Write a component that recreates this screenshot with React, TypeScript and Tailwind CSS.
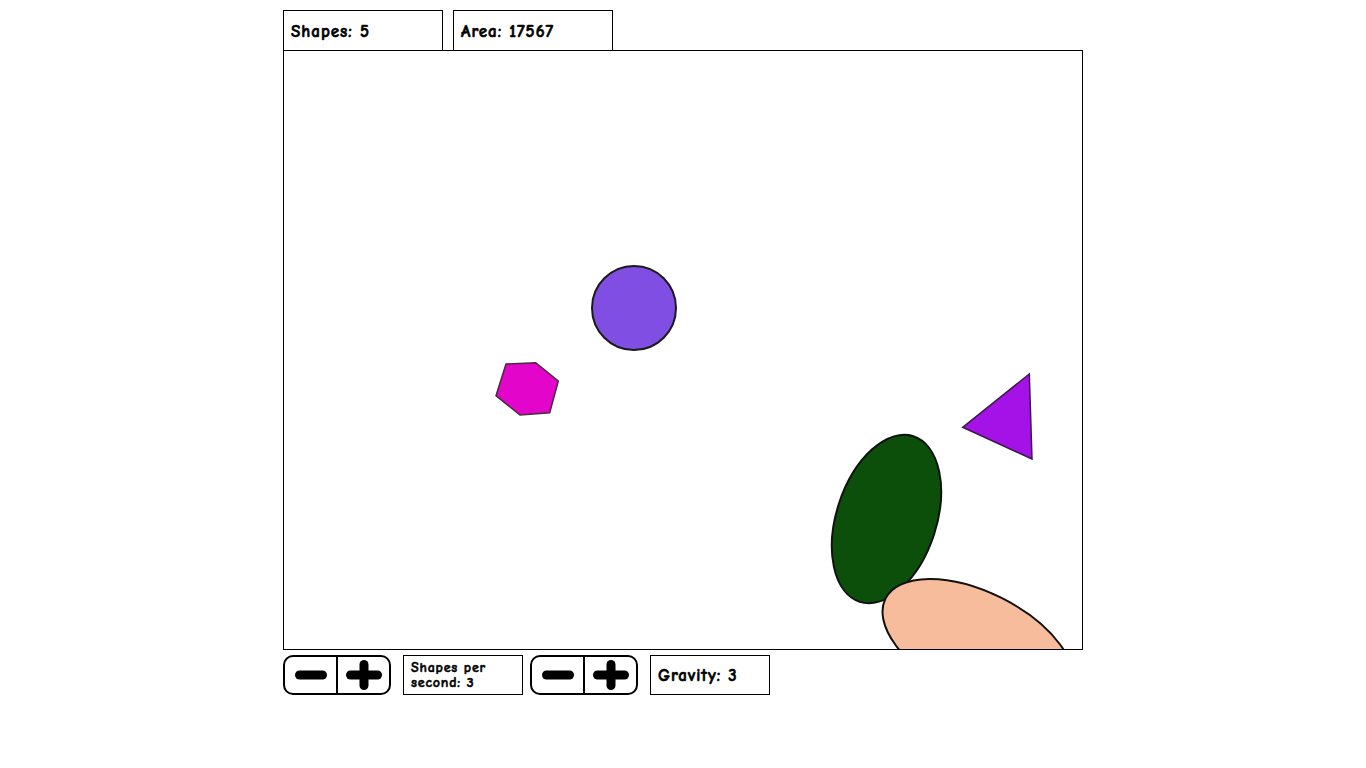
const FONT = { fontFamily: '"Comic Sans MS", "Comic Neue", "DejaVu Sans", sans-serif' };

function StatBox({
  children,
  className = "",
}: {
  children: React.ReactNode;
  className?: string;
}) {
  return (
    <div
      className={`h-[40px] border border-black flex items-center pl-[7px] pt-[2px] font-bold text-[17px] tracking-[1px] text-black [-webkit-text-stroke:0.6px_black] ${className}`}
    >
      {children}
    </div>
  );
}

function Stepper() {
  return (
    <div className="w-[108px] h-[40px] border-2 border-black rounded-[10px] flex overflow-hidden">
      <button className="flex-1 flex items-center justify-center border-r-2 border-black">
        <svg width="34" height="12" viewBox="0 0 34 12">
          <line x1="5.5" y1="6" x2="28.5" y2="6" stroke="black" strokeWidth="9" strokeLinecap="round" />
        </svg>
      </button>
      <button className="flex-1 flex items-center justify-center">
        <svg width="36" height="30" viewBox="0 0 36 30">
          <line x1="4.5" y1="15" x2="31.5" y2="15" stroke="black" strokeWidth="9" strokeLinecap="round" />
          <line x1="18" y1="4.5" x2="18" y2="25.5" stroke="black" strokeWidth="9" strokeLinecap="round" />
        </svg>
      </button>
    </div>
  );
}

export default function App() {
  return (
    <div className="min-h-screen bg-white" style={FONT}>
      <div className="w-[800px] ml-[283px] pt-[10px]">
        {/* TOP STATS */}
        <div className="flex gap-[10px]">
          <StatBox className="w-[160px] border-b-0">Shapes: 5</StatBox>
          <StatBox className="w-[160px] border-b-0">Area: 17567</StatBox>
        </div>

        {/* CANVAS */}
        <div className="w-[800px] h-[600px] border border-black">
          <svg width="798" height="598" viewBox="0 0 798 598" className="block">
            <circle cx="350" cy="257" r="42" fill="#814ee4" stroke="#1a1a1a" strokeWidth="2" />
            <polygon
              points="222,313 251.7,311.7 274.3,330 265.7,361.7 236,364 212,344.7"
              fill="#e305c9"
              stroke="#4a2a40"
              strokeWidth="1.5"
            />
            <polygon
              points="745.3,323 678.7,376.3 748,408"
              fill="#a512e8"
              stroke="#3a1a4a"
              strokeWidth="1.5"
            />
            <ellipse
              cx="602.5"
              cy="468"
              rx="50"
              ry="87"
              transform="rotate(18 602.5 468)"
              fill="#0b4f0b"
              stroke="#111"
              strokeWidth="2"
            />
            <ellipse
              cx="694"
              cy="594"
              rx="103.5"
              ry="52.6"
              transform="rotate(26.6 694 594)"
              fill="#f6bc9c"
              stroke="#111"
              strokeWidth="2"
            />
          </svg>
        </div>

        {/* CONTROLS */}
        <div className="flex items-start mt-[5px]">
          <Stepper />
          <div className="ml-[12px] w-[120px] h-[40px] border border-black pl-[7px] pt-[4px] font-bold text-[14px] leading-[15px] tracking-[0.8px] text-black [-webkit-text-stroke:0.5px_black]">
            Shapes per
            <br />
            second: 3
          </div>
          <div className="ml-[7px]">
            <Stepper />
          </div>
          <StatBox className="ml-[12px] w-[120px]">Gravity: 3</StatBox>
        </div>
      </div>
    </div>
  );
}
